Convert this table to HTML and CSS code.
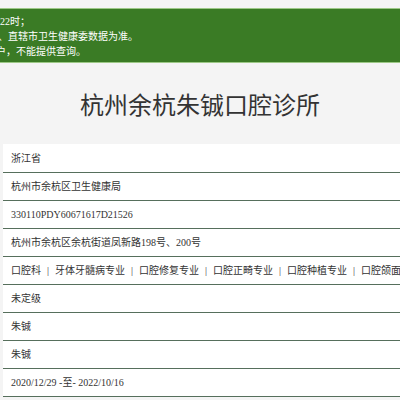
FILE: index.html
```html
<!DOCTYPE html>
<html lang="zh-CN">
<head>
<meta charset="utf-8">
<title>杭州余杭朱铖口腔诊所</title>
<link rel="stylesheet" href="styles.css">
</head>
<body>
<div class="page">
  <div class="notice">
    <div class="line l1">22时；</div>
    <div class="line l2">、直辖市卫生健康委数据为准。</div>
    <div class="line l3">户，不能提供查询。</div>
  </div>
  <h1 class="title">杭州余杭朱铖口腔诊所</h1>
  <div class="info">
    <div class="row">浙江省</div>
    <div class="row">杭州市余杭区卫生健康局</div>
    <div class="row">330110PDY60671617D21526</div>
    <div class="row">杭州市余杭区余杭街道凤新路198号、200号</div>
    <div class="row">口腔科<span class="sep">|</span>牙体牙髓病专业<span class="sep">|</span>口腔修复专业<span class="sep">|</span>口腔正畸专业<span class="sep">|</span>口腔种植专业<span class="sep">|</span>口腔颌面外科专业</div>
    <div class="row">未定级</div>
    <div class="row">朱铖</div>
    <div class="row">朱铖</div>
    <div class="row">2020/12/29 -至- 2022/10/16</div>
  </div>
</div>
</body>
</html>
```
FILE: styles.css
```css
html, body {
  margin: 0;
  padding: 0;
  background: #f4f4f4;
  overflow: hidden;
}
.page {
  width: 400px;
  height: 400px;
  overflow: hidden;
  padding-top: 8px;
  box-sizing: border-box;
  font-family: "Liberation Serif", "Noto Sans CJK SC", serif;
}
.notice {
  margin: 0 -3px;
  background: #3a7b25;
  border: 1px solid #9cc886;
  padding: 5px 0 3px;
  color: #fff;
  font-size: 10px;
  line-height: 15px;
  white-space: nowrap;
}
.line { padding-left: 3px; }
.l1 { margin-left: -1px; }
.l2 { margin-left: -3px; }
.l3 { margin-left: -5px; }
.title {
  margin: 0;
  height: 81px;
  line-height: 81px;
  text-align: center;
  font-family: "Noto Sans CJK SC", sans-serif;
  font-weight: normal;
  font-size: 24px;
  color: #333;
}
.info {
  margin-left: 3px;
  background: #fff;
  padding-top: 1px;
}
.row {
  height: 27px;
  line-height: 27px;
  padding-left: 8px;
  border-bottom: 1px solid #566f5c;
  font-size: 10px;
  color: #333;
  white-space: nowrap;
  overflow: hidden;
}
.sep {
  padding: 0 6px;
}
```
